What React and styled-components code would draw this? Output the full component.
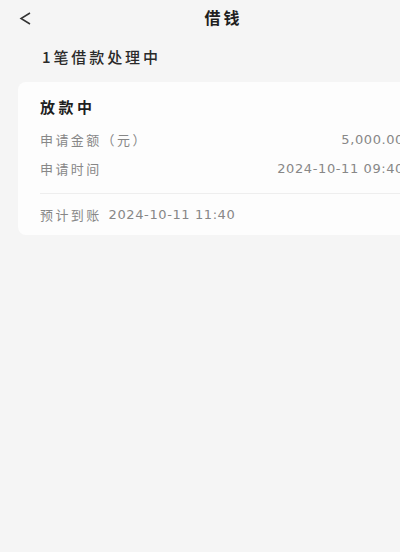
import React from "react";
import styled, { createGlobalStyle } from "styled-components";

const Global = createGlobalStyle`
  html, body { margin: 0; padding: 0; background: #f5f5f5; overflow: hidden; }
  body { font-family: "Noto Sans CJK SC", "Noto Sans", sans-serif; }
`;

const Page = styled.div`
  width: 444px;
  min-height: 552px;
  background: #f5f5f5;
`;

const Header = styled.div`
  position: relative;
  height: 34px;
  display: flex;
  align-items: center;
  justify-content: center;
`;

const Back = styled.button`
  position: absolute;
  left: 18px;
  top: 11px;
  width: 14px;
  height: 14px;
  padding: 0;
  border: none;
  background: none;
  display: flex;
  align-items: center;
  justify-content: center;
`;

const Title = styled.div`
  font-size: 16px;
  font-weight: 700;
  letter-spacing: 3px;
  margin-right: -3px;
  color: #1f1f1f;
  line-height: 34px;
`;

const Subtitle = styled.div`
  margin-top: 13px;
  padding-left: 42px;
  font-size: 15px;
  font-weight: 500;
  letter-spacing: 2.9px;
  color: #2a2a2a;
  line-height: 20px;
`;

const Card = styled.div`
  margin: 15px 18px 0;
  background: #fdfdfd;
  border-radius: 8px;
  padding: 14px 22px 10px;
`;

const CardTitle = styled.div`
  font-size: 15px;
  font-weight: 700;
  letter-spacing: 3.5px;
  color: #1f1f1f;
  line-height: 22px;
`;

const Row = styled.div`
  display: flex;
  justify-content: space-between;
  align-items: center;
  line-height: 20px;
  margin-top: ${(p) => p.$gap}px;
  font-size: 13px;
  letter-spacing: 2.4px;
  color: #878787;
`;

const Num = styled.span`
  font-family: "DejaVu Sans", "Noto Sans CJK SC", sans-serif;
  font-size: 13px;
  letter-spacing: 0.6px;
  color: #878787;
`;

const Divider = styled.div`
  height: 1px;
  background: #eeeeee;
  margin-top: 14px;
`;

const Footer = styled.div`
  margin-top: 11px;
  line-height: 20px;
  font-size: 13px;
  letter-spacing: 2.4px;
  color: #878787;
  display: flex;
  gap: 7px;
`;

export default function App() {
  return (
    <Page>
      <Global />
      <Header>
        <Back aria-label="返回">
          <svg width="12" height="13" viewBox="0 0 12 13">
            <path d="M11 1 L2 6.5 L11 12" fill="none" stroke="#333" strokeWidth="1.5" />
          </svg>
        </Back>
        <Title>借钱</Title>
      </Header>
      <Subtitle>1笔借款处理中</Subtitle>
      <Card>
        <CardTitle>放款中</CardTitle>
        <Row $gap={12}>
          <span>申请金额（元）</span>
          <Num>5,000.00</Num>
        </Row>
        <Row $gap={9}>
          <span>申请时间</span>
          <Num>2024-10-11 09:40</Num>
        </Row>
        <Divider />
        <Footer>
          <span>预计到账</span>
          <Num>2024-10-11 11:40</Num>
        </Footer>
      </Card>
    </Page>
  );
}
